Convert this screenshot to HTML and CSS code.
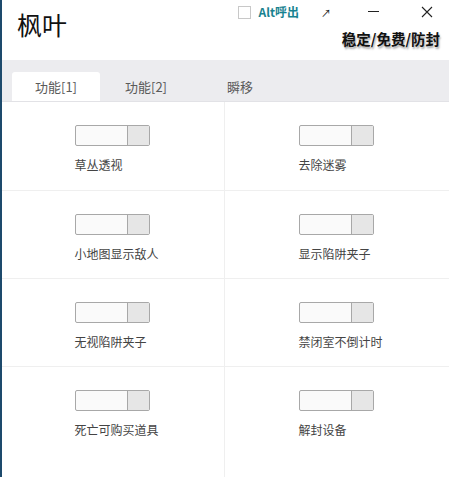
FILE: index.html
```html
<!DOCTYPE html>
<html lang="zh">
<head>
<meta charset="utf-8">
<title>枫叶</title>
<link rel="stylesheet" href="styles.css">
</head>
<body>
<div class="app">
  <header class="header">
    <div class="title">枫叶</div>
    <div class="header-right">
      <div class="top-row">
        <label class="alt"><span class="checkbox"></span><span class="alt-text">Alt呼出</span></label>
        <span class="ctrl ctrl-pop">↗</span>
        <span class="ctrl ctrl-min"><span class="min-line"></span></span>
        <span class="ctrl ctrl-close">
          <svg width="12" height="12" viewBox="0 0 12 12"><path d="M1 1 L11 11 M11 1 L1 11" stroke="#222" stroke-width="1.1" fill="none"/></svg>
        </span>
      </div>
      <div class="tagline">稳定/免费/防封</div>
    </div>
  </header>
  <nav class="tabs">
    <div class="tab tab-active">功能[1]</div>
    <div class="tab tab-2">功能[2]</div>
    <div class="tab tab-3">瞬移</div>
  </nav>
  <main class="grid">
    <div class="cell"><div class="item"><div class="toggle"><span class="knob"></span></div><div class="label">草丛透视</div></div></div>
    <div class="cell"><div class="item"><div class="toggle"><span class="knob"></span></div><div class="label">去除迷雾</div></div></div>
    <div class="cell"><div class="item"><div class="toggle"><span class="knob"></span></div><div class="label">小地图显示敌人</div></div></div>
    <div class="cell"><div class="item"><div class="toggle"><span class="knob"></span></div><div class="label">显示陷阱夹子</div></div></div>
    <div class="cell"><div class="item"><div class="toggle"><span class="knob"></span></div><div class="label">无视陷阱夹子</div></div></div>
    <div class="cell"><div class="item"><div class="toggle"><span class="knob"></span></div><div class="label">禁闭室不倒计时</div></div></div>
    <div class="cell cell-last"><div class="item"><div class="toggle"><span class="knob"></span></div><div class="label">死亡可购买道具</div></div></div>
    <div class="cell cell-last"><div class="item"><div class="toggle"><span class="knob"></span></div><div class="label">解封设备</div></div></div>
  </main>
</div>
</body>
</html>
```
FILE: styles.css
```css
html, body {
  margin: 0;
  padding: 0;
  background: #ffffff;
}
body {
  font-family: "Noto Sans CJK SC", "Noto Sans", sans-serif;
  color: #333;
}
.app {
  width: 447px;
  height: 477px;
  border-left: 2px solid #1d4a6c;
  overflow: hidden;
  display: flex;
  flex-direction: column;
}
.header {
  height: 60px;
  display: flex;
  justify-content: space-between;
  flex-shrink: 0;
}
.title {
  font-size: 25px;
  line-height: 25px;
  color: #111;
  padding: 12px 0 0 15px;
}
.header-right {
  display: flex;
  flex-direction: column;
  align-items: flex-end;
}
.top-row {
  display: flex;
  align-items: center;
  height: 24px;
}
.alt {
  display: flex;
  align-items: center;
  margin-right: 12px;
}
.checkbox {
  width: 11px;
  height: 11px;
  border: 1px solid #c8c8c8;
  background: #fff;
  margin-right: 7px;
}
.alt-text {
  font-size: 12px;
  font-weight: bold;
  color: #178290;
  line-height: 14px;
}
.ctrl {
  display: flex;
  align-items: center;
  justify-content: center;
  height: 24px;
  color: #222;
}
.ctrl-pop {
  width: 30px;
  font-size: 10px;
}
.ctrl-min {
  width: 64px;
}
.min-line {
  width: 11px;
  height: 1px;
  background: #222;
  margin-top: -1px;
}
.ctrl-close {
  width: 44px;
}
.tagline {
  font-size: 14.5px;
  font-weight: bold;
  color: #111;
  line-height: 16px;
  margin-top: 7px;
  margin-right: 9px;
  text-shadow: 1px 2px 2px rgba(0, 0, 0, 0.35);
}
.tabs {
  height: 42px;
  background: #ececef;
  display: flex;
  align-items: flex-end;
  padding-left: 10px;
  border-bottom: 1px solid #e2e2e6;
  box-sizing: border-box;
  flex-shrink: 0;
}
.tab {
  height: 29px;
  width: 90px;
  display: flex;
  align-items: center;
  justify-content: center;
  font-size: 13px;
  color: #5a5a5a;
}
.tab-active {
  width: 88px;
  background: #fff;
  border-radius: 3px 3px 0 0;
}
.tab-2 {
  width: 92px;
}
.tab-3 {
  width: 96px;
}
.grid {
  flex: 1;
  display: grid;
  grid-template-columns: 223px 1fr;
  grid-template-rows: 89px 88px 88px 1fr;
}
.cell {
  border-bottom: 1px solid #efefef;
  padding-top: 23px;
  box-sizing: border-box;
}
.cell:nth-child(odd) {
  border-right: 1px solid #efefef;
}
.cell-last {
  border-bottom: none;
}
.item {
  width: 75px;
  margin: 0 auto;
  transform: translateX(-1px);
}
.toggle {
  width: 75px;
  height: 21px;
  box-sizing: border-box;
  border: 1px solid #a8a8a8;
  border-radius: 2px;
  background: #fafafa;
  display: flex;
  justify-content: flex-end;
}
.knob {
  width: 21px;
  height: 100%;
  background: #e6e6e6;
  border-left: 1px solid #a8a8a8;
}
.label {
  margin-top: 11px;
  font-size: 12px;
  line-height: 16px;
  color: #444;
  white-space: nowrap;
}
```
